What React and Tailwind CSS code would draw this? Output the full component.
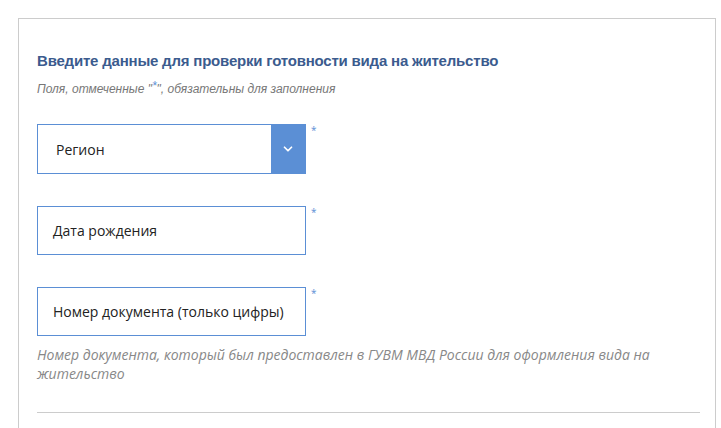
import { ChevronDown } from "lucide-react";

const fields = [
  { label: "Дата рождения" },
  { label: "Номер документа (только цифры)" },
];

const Star = () => (
  <span className="ml-[5px] mt-[1px] self-start text-[10px] leading-none text-[#5b8fd5]">*</span>
);

export default function App() {
  return (
    <div className="min-h-[428px] bg-white pl-[18px] pt-[18px] font-['Open_Sans',sans-serif]">
      <div className="w-[698px] h-[420px] border-t border-l border-r border-[#cccccc] px-[18px] pt-[32px]">
        <h2 className="font-['Liberation_Sans',sans-serif] text-[15px] font-bold leading-[20px] tracking-[-0.2px] text-[#3b5b8e]">
          Введите данные для проверки готовности вида на жительство
        </h2>
        <p className="mt-[10px] font-['Liberation_Sans',sans-serif] text-[12px] italic leading-[16px] text-[#777777]">
          Поля, отмеченные "<span className="relative -top-[3px] text-[#5b8fd5]">*</span>", обязательны для заполнения
        </p>

        <div className="mt-[27px] flex">
          <div className="flex h-[50px] w-[269px] border border-[#5b8fd5]">
            <div className="flex flex-1 items-center pl-[18px] text-[14px] text-[#222222]">Регион</div>
            <div className="flex w-[34px] items-center justify-center bg-[#5b8fd5]">
              <ChevronDown size={14} strokeWidth={3} className="text-white" />
            </div>
          </div>
          <Star />
        </div>

        {fields.map((f) => (
          <div key={f.label} className="mt-[32px] flex">
            <div className="flex h-[49px] w-[269px] items-center border border-[#5b8fd5] pl-[15px] text-[14px] text-[#222222]">
              {f.label}
            </div>
            <Star />
          </div>
        ))}

        <p className="mt-[9px] pr-[30px] text-[14px] italic leading-[19px] text-[#888888]">
          Номер документа, который был предоставлен в ГУВМ МВД России для оформления вида на жительство
        </p>

        <div className="mt-[29px] h-px w-[663px] bg-[#cccccc]" />
      </div>
    </div>
  );
}
